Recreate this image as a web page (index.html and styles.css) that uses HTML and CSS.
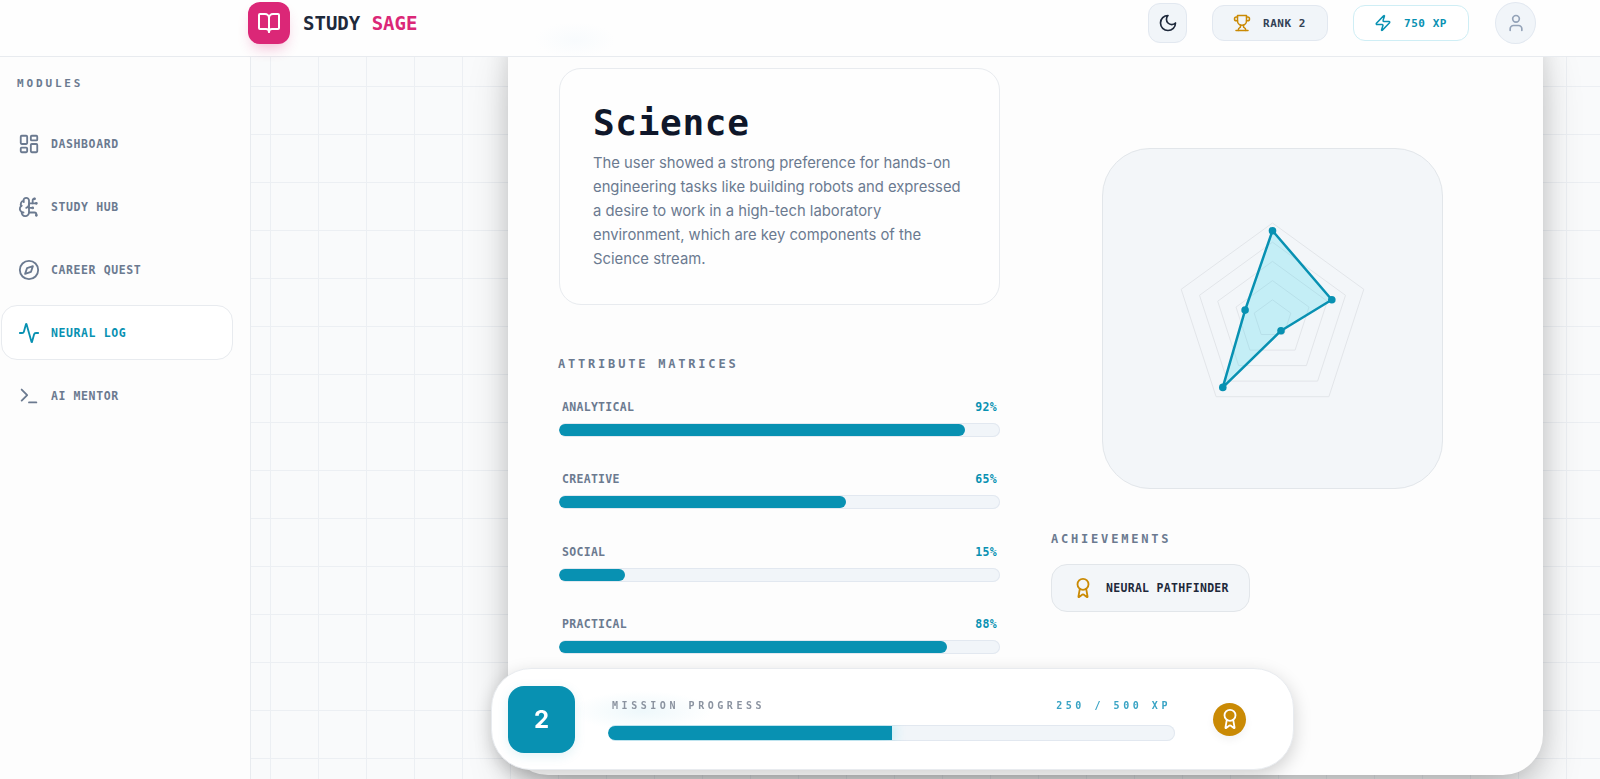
FILE: index.html
```html
<!DOCTYPE html>
<html lang="en">
<head>
    <meta charset="UTF-8">
    <meta name="viewport" content="width=device-width, initial-scale=1.0">
    <title>Study Sage</title>
    <link rel="stylesheet" href="styles.css">
</head>
<body>
    <header class="topbar">
        <div class="brand">
            <div class="brand-mark">
                <svg class="icon" width="24" height="24" viewBox="0 0 24 24"><path d="M12 7v14"/><path d="M3 18a1 1 0 0 1-1-1V4a1 1 0 0 1 1-1h5a4 4 0 0 1 4 4 4 4 0 0 1 4-4h5a1 1 0 0 1 1 1v13a1 1 0 0 1-1 1h-6a3 3 0 0 0-3 3 3 3 0 0 0-3-3z"/></svg>
            </div>
            <div class="brand-name">STUDY <span>SAGE</span></div>
        </div>
        <div class="top-actions">
            <button class="theme-btn" type="button">
                <svg class="icon" width="20" height="20" viewBox="0 0 24 24"><path d="M12 3a6 6 0 0 0 9 9 9 9 0 1 1-9-9Z"/></svg>
            </button>
            <div class="stat-chip rank">
                <svg class="icon" width="18" height="18" viewBox="0 0 24 24"><path d="M6 9H4.5a2.5 2.5 0 0 1 0-5H6"/><path d="M18 9h1.5a2.5 2.5 0 0 0 0-5H18"/><path d="M4 22h16"/><path d="M10 14.66V17c0 .55-.47.98-.97 1.21C7.85 18.75 7 20.24 7 22"/><path d="M14 14.66V17c0 .55.47.98.97 1.21C16.15 18.75 17 20.24 17 22"/><path d="M18 2H6v7a6 6 0 0 0 12 0V2Z"/></svg>
                <span>RANK 2</span>
            </div>
            <div class="stat-chip xp">
                <svg class="icon" width="18" height="18" viewBox="0 0 24 24"><path d="M4 14a1 1 0 0 1-.78-1.63l9.9-10.2a.5.5 0 0 1 .86.46l-1.92 6.02A1 1 0 0 0 13 10h7a1 1 0 0 1 .78 1.63l-9.9 10.2a.5.5 0 0 1-.86-.46l1.92-6.02A1 1 0 0 0 11 14z"/></svg>
                <span>750 XP</span>
            </div>
            <div class="avatar">
                <svg class="icon" width="20" height="20" viewBox="0 0 24 24"><path d="M19 21v-2a4 4 0 0 0-4-4H9a4 4 0 0 0-4 4v2"/><circle cx="12" cy="7" r="4"/></svg>
            </div>
        </div>
    </header>

    <div class="shell">
        <aside class="sidebar">
            <div class="sidebar-title">MODULES</div>
            <nav class="nav-list">
                <a class="nav-item">
                    <svg class="icon" width="22" height="22" viewBox="0 0 24 24"><rect x="3" y="3" width="7" height="9" rx="1"/><rect x="14" y="3" width="7" height="5" rx="1"/><rect x="14" y="12" width="7" height="9" rx="1"/><rect x="3" y="16" width="7" height="5" rx="1"/></svg>
                    <span>DASHBOARD</span>
                </a>
                <a class="nav-item">
                    <svg class="icon" width="22" height="22" viewBox="0 0 24 24"><path d="M12 5a3 3 0 1 0-5.997.125 4 4 0 0 0-2.526 5.77 4 4 0 0 0 .556 6.588A4 4 0 1 0 12 18Z"/><path d="M9 13a4.5 4.5 0 0 0 3-4"/><path d="M6.003 5.125A3 3 0 0 0 6.401 6.5"/><path d="M3.477 10.896a4 4 0 0 1 .585-.396"/><path d="M6 18a4 4 0 0 1-1.967-.516"/><path d="M12 13h4"/><path d="M12 18h6a2 2 0 0 1 2 2v1"/><path d="M12 8h8"/><path d="M16 8V5a2 2 0 0 1 2-2"/><circle cx="16" cy="13" r=".5"/><circle cx="18" cy="3" r=".5"/><circle cx="20" cy="21" r=".5"/><circle cx="20" cy="8" r=".5"/></svg>
                    <span>STUDY HUB</span>
                </a>
                <a class="nav-item">
                    <svg class="icon" width="22" height="22" viewBox="0 0 24 24"><circle cx="12" cy="12" r="10"/><path d="m16.24 7.76-2.12 6.36-6.36 2.12 2.12-6.36 6.36-2.12z"/></svg>
                    <span>CAREER QUEST</span>
                </a>
                <a class="nav-item active">
                    <svg class="icon" width="22" height="22" viewBox="0 0 24 24"><path d="M22 12h-2.48a2 2 0 0 0-1.93 1.46l-2.35 8.36a.25.25 0 0 1-.48 0L9.24 2.18a.25.25 0 0 0-.48 0l-2.35 8.36A2 2 0 0 1 4.49 12H2"/></svg>
                    <span>NEURAL LOG</span>
                </a>
                <a class="nav-item">
                    <svg class="icon" width="22" height="22" viewBox="0 0 24 24"><path d="m4 17 6-6-6-6"/><path d="M12 19h8"/></svg>
                    <span>AI MENTOR</span>
                </a>
            </nav>
        </aside>

        <main class="content">
            <section class="result-card">
                <div class="col">
                    <div class="stream-box">
                        <h1>Science</h1>
                        <p>The user showed a strong preference for hands-on engineering tasks like building robots and expressed a desire to work in a high-tech laboratory environment, which are key components of the Science stream.</p>
                    </div>

                    <h2 class="section-title matrices">ATTRIBUTE MATRICES</h2>
                    <div class="attr">
                        <div class="attr-head"><span>ANALYTICAL</span><b>92%</b></div>
                        <div class="attr-track"><div class="attr-fill" style="width: 92%"></div></div>
                    </div>
                    <div class="attr">
                        <div class="attr-head"><span>CREATIVE</span><b>65%</b></div>
                        <div class="attr-track"><div class="attr-fill" style="width: 65%"></div></div>
                    </div>
                    <div class="attr">
                        <div class="attr-head"><span>SOCIAL</span><b>15%</b></div>
                        <div class="attr-track"><div class="attr-fill" style="width: 15%"></div></div>
                    </div>
                    <div class="attr">
                        <div class="attr-head"><span>PRACTICAL</span><b>88%</b></div>
                        <div class="attr-track"><div class="attr-fill" style="width: 88%"></div></div>
                    </div>
                </div>

                <div class="col col-right">
                    <div class="radar-box">
                        <svg class="radar" width="341" height="341" viewBox="-170.5 -171 341 341">
                            <polygon points="0,-96 91.3,-29.7 56.4,77.7 -56.4,77.7 -91.3,-29.7"/>
                            <polygon points="0,-76.8 73,-23.7 45.1,62.1 -45.1,62.1 -73,-23.7"/>
                            <polygon points="0,-57.6 54.8,-17.8 33.9,46.6 -33.9,46.6 -54.8,-17.8"/>
                            <polygon points="0,-38.4 36.5,-11.9 22.6,31.1 -22.6,31.1 -36.5,-11.9"/>
                            <polygon points="0,-19.2 18.3,-5.9 11.3,15.5 -11.3,15.5 -18.3,-5.9"/>
                            <polygon class="radar-data" points="0,-88.3 59.3,-19.3 8.5,11.7 -49.7,68.4 -27.4,-8.9"/>
                            <circle cx="0" cy="-88.3" r="3.8"/>
                            <circle cx="59.3" cy="-19.3" r="3.8"/>
                            <circle cx="8.5" cy="11.7" r="3.8"/>
                            <circle cx="-49.7" cy="68.4" r="3.8"/>
                            <circle cx="-27.4" cy="-8.9" r="3.8"/>
                        </svg>
                    </div>
                    <h2 class="section-title achievements">ACHIEVEMENTS</h2>
                    <div class="badge-chip">
                        <svg class="icon" width="22" height="22" viewBox="0 0 24 24"><path d="m15.477 12.89 1.515 8.526a.5.5 0 0 1-.81.47l-3.58-2.687a1 1 0 0 0-1.197 0l-3.586 2.686a.5.5 0 0 1-.81-.469l1.514-8.526"/><circle cx="12" cy="8" r="6"/></svg>
                        <span>NEURAL PATHFINDER</span>
                    </div>
                </div>
            </section>
        </main>
    </div>

    <div class="mission-bar">
        <div class="level">2</div>
        <div class="mission-body">
            <div class="mission-head"><span>MISSION PROGRESS</span><b>250 / 500 XP</b></div>
            <div class="mission-track"><div class="mission-fill" style="width: 50%"></div></div>
        </div>
        <div class="medal">
            <svg class="icon" width="22" height="22" viewBox="0 0 24 24"><path d="m15.477 12.89 1.515 8.526a.5.5 0 0 1-.81.47l-3.58-2.687a1 1 0 0 0-1.197 0l-3.586 2.686a.5.5 0 0 1-.81-.469l1.514-8.526"/><circle cx="12" cy="8" r="6"/></svg>
        </div>
    </div>
</body>
</html>
```

FILE: styles.css
```css
* {
    box-sizing: border-box;
}

html,
body {
    height: 100%;
}

body {
    margin: 0;
    overflow: hidden;
    display: flex;
    flex-direction: column;
    font-family: "DejaVu Sans Mono", "Liberation Mono", monospace;
    background-color: #f9fafb;
    color: #0f172a;
}

.icon {
    display: block;
    flex: none;
    fill: none;
    stroke: currentColor;
    stroke-width: 2;
    stroke-linecap: round;
    stroke-linejoin: round;
}

.topbar {
    position: relative;
    z-index: 10;
    flex: none;
    height: 57px;
    padding: 2px 64px 0 248px;
    display: flex;
    justify-content: space-between;
    align-items: flex-start;
    background-color: #fefefe;
    background-image: radial-gradient(ellipse 40px 18px at 575px 40px, #f8fbfd, transparent);
    border-bottom: 1px solid #e8ebef;
}

.brand {
    display: flex;
    align-items: center;
    gap: 13px;
}

.brand-mark {
    width: 42px;
    height: 42px;
    display: flex;
    align-items: center;
    justify-content: center;
    border-radius: 12px;
    background-color: #db2777;
    color: #fff;
    box-shadow: 0 8px 14px -4px rgba(219, 39, 119, 0.3);
}

.brand-name {
    margin-top: -1px;
    font-size: 19px;
    font-weight: 700;
    color: #1e293b;
}

.brand-name span {
    color: #db2777;
}

.top-actions {
    display: flex;
    align-items: center;
    gap: 25px;
    height: 42px;
}

.theme-btn {
    width: 39px;
    height: 40px;
    padding: 0;
    display: flex;
    align-items: center;
    justify-content: center;
    background-color: #f1f5f9;
    border: 1px solid #e2e8f0;
    border-radius: 12px;
    color: #1e293b;
}

.stat-chip {
    width: 116px;
    height: 36px;
    padding: 0 20px;
    display: flex;
    align-items: center;
    gap: 12px;
    border-radius: 12px;
    font-size: 11px;
    font-weight: 700;
    letter-spacing: 0.55px;
    white-space: nowrap;
}

.rank {
    background-color: #f1f5f9;
    border: 1px solid #e2e8f0;
    color: #334155;
}

.rank .icon {
    color: #ca8a04;
}

.xp {
    background-color: #fff;
    border: 1px solid #cfeef5;
    color: #0891b2;
}

.avatar {
    width: 41px;
    height: 42px;
    margin-left: 1px;
    display: flex;
    align-items: center;
    justify-content: center;
    border-radius: 50%;
    background-color: #f1f5f9;
    border: 1px solid #e2e8f0;
    color: #94a3b8;
}

.shell {
    flex: 1;
    display: flex;
    min-height: 0;
}

.sidebar {
    flex: none;
    width: 251px;
    padding: 19px 17px 0 1px;
    background-color: #fdfdfd;
    border-right: 1px solid #e8ebef;
}

.sidebar-title {
    margin: 0 0 24px 16px;
    font-size: 11px;
    line-height: 16px;
    font-weight: 700;
    letter-spacing: 2.85px;
    color: #6b7a90;
}

.nav-list {
    display: flex;
    flex-direction: column;
    gap: 8px;
}

.nav-item {
    height: 55px;
    padding-left: 16px;
    display: flex;
    align-items: center;
    gap: 11px;
    border: 1px solid transparent;
    border-radius: 16px;
    font-size: 11.5px;
    font-weight: 700;
    letter-spacing: 0.6px;
    color: #6b7a90;
}

.nav-item.active {
    background-color: #fff;
    border-color: #e8ebef;
    color: #0891b2;
}

.content {
    flex: 1;
    padding-left: 257px;
    background-color: #f9fafb;
    background-image:
        linear-gradient(to right, #eceff3 1px, transparent 1px),
        linear-gradient(to bottom, #eceff3 1px, transparent 1px);
    background-size: 48px 48px;
    background-position: 19px 29px;
}

.result-card {
    width: 1035px;
    height: 758px;
    margin-top: -40px;
    padding: 51px 51px 0;
    display: grid;
    grid-template-columns: 441px 441px;
    column-gap: 51px;
    align-content: start;
    background-color: #fdfdfd;
    border-radius: 40px;
    box-shadow: 0 25px 50px -12px rgba(0, 0, 0, 0.3), 0 0 24px rgba(0, 0, 0, 0.1);
}

.stream-box {
    height: 237px;
    padding: 34px 33px 0;
    background-color: #fefefe;
    border: 1px solid #e8ebef;
    border-radius: 22px;
}

.stream-box h1 {
    margin: 0 0 8px;
    font-size: 36px;
    line-height: 40px;
    font-weight: 700;
    letter-spacing: 0.7px;
    color: #0f172a;
}

.stream-box p {
    margin: 0;
    font-family: Inter, "Noto Sans", sans-serif;
    font-size: 14.8px;
    line-height: 24px;
    color: #6b7a90;
}

.section-title {
    margin: 0;
    font-size: 12px;
    line-height: 16px;
    font-weight: 700;
    color: #6b7a90;
}

.matrices {
    margin: 51px 0 25px -1px;
    letter-spacing: 2.8px;
}

.attr {
    margin-bottom: 32.4px;
}

.attr-head {
    height: 20px;
    margin-bottom: 6px;
    padding: 0 3px;
    display: flex;
    justify-content: space-between;
    align-items: center;
    font-size: 11.5px;
    font-weight: 700;
    letter-spacing: 0.3px;
    color: #6b7a90;
}

.attr-head b {
    color: #0891b2;
}

.attr-track {
    height: 14px;
    padding: 1px 0;
    background-color: #f1f5f9;
    border-radius: 7px;
    box-shadow: inset 0 0 0 1px #e2e8f0;
    overflow: hidden;
}

.attr-fill {
    height: 100%;
    background-color: #0891b2;
    border-radius: 7px;
}

.col-right {
    padding-top: 80px;
}

.radar-box {
    width: 341px;
    height: 341px;
    margin-left: 51px;
    background-color: #f3f6f9;
    border: 1px solid #e2e6ea;
    border-radius: 48px;
    overflow: hidden;
}

.radar {
    display: block;
    margin: -1px;
}

.radar polygon {
    fill: none;
    stroke: #e2e5e9;
    stroke-width: 1;
}

.radar .radar-data {
    fill: rgba(34, 211, 238, 0.22);
    stroke: #0891b2;
    stroke-width: 2.5;
    stroke-linejoin: round;
}

.radar circle {
    fill: #0891b2;
}

.achievements {
    margin: 42px 0 17px;
    letter-spacing: 2.8px;
}

.badge-chip {
    width: 199px;
    height: 48px;
    padding-left: 20px;
    display: flex;
    align-items: center;
    gap: 12px;
    background-color: #f3f6f9;
    border: 1px solid #e2e6ea;
    border-radius: 16px;
    font-size: 11.5px;
    font-weight: 700;
    letter-spacing: 0.3px;
    color: #1e293b;
}

.badge-chip .icon {
    color: #ca8a04;
}

.mission-bar {
    position: fixed;
    left: 491px;
    bottom: 9px;
    z-index: 20;
    width: 803px;
    height: 102px;
    padding: 0 47px 0 16px;
    display: flex;
    align-items: center;
    background-color: #fff;
    background-image: radial-gradient(ellipse 70px 20px at 150px 42px, #eef8fb, transparent);
    border: 1px solid #e8ebef;
    border-radius: 40px;
    box-shadow: 0 6px 18px rgba(0, 0, 0, 0.18);
}

.level {
    flex: none;
    width: 67px;
    height: 67px;
    display: flex;
    align-items: center;
    justify-content: center;
    background-color: #0891b2;
    border-radius: 16px;
    font-family: Inter, "Noto Sans", sans-serif;
    font-size: 24px;
    font-weight: 700;
    color: #fff;
    box-shadow: 0 3px 12px rgba(8, 145, 178, 0.12);
}

.mission-body {
    flex: 1;
    margin: 0 38px 0 33px;
}

.mission-head {
    height: 16px;
    margin-bottom: 11px;
    padding: 0 4px 0 4px;
    display: flex;
    justify-content: space-between;
    align-items: center;
    font-size: 10px;
    letter-spacing: 3.55px;
    font-weight: 700;
    color: #8b93a0;
}

.mission-head b {
    color: #38a3c4;
}

.mission-track {
    height: 16px;
    padding: 1px 0;
    background-color: #f1f5f9;
    border-radius: 8px;
    box-shadow: inset 0 0 0 1px #e2e8f0;
    overflow: hidden;
}

.mission-fill {
    height: 100%;
    background-color: #0891b2;
    border-radius: 8px 0 0 8px;
    box-shadow: 0 0 14px rgba(34, 211, 238, 0.4);
}

.medal {
    flex: none;
    width: 33px;
    height: 33px;
    display: flex;
    align-items: center;
    justify-content: center;
    background-color: #ca8a04;
    border-radius: 50%;
    color: #fff;
    box-shadow: 0 4px 8px rgba(0, 0, 0, 0.05);
}
```
